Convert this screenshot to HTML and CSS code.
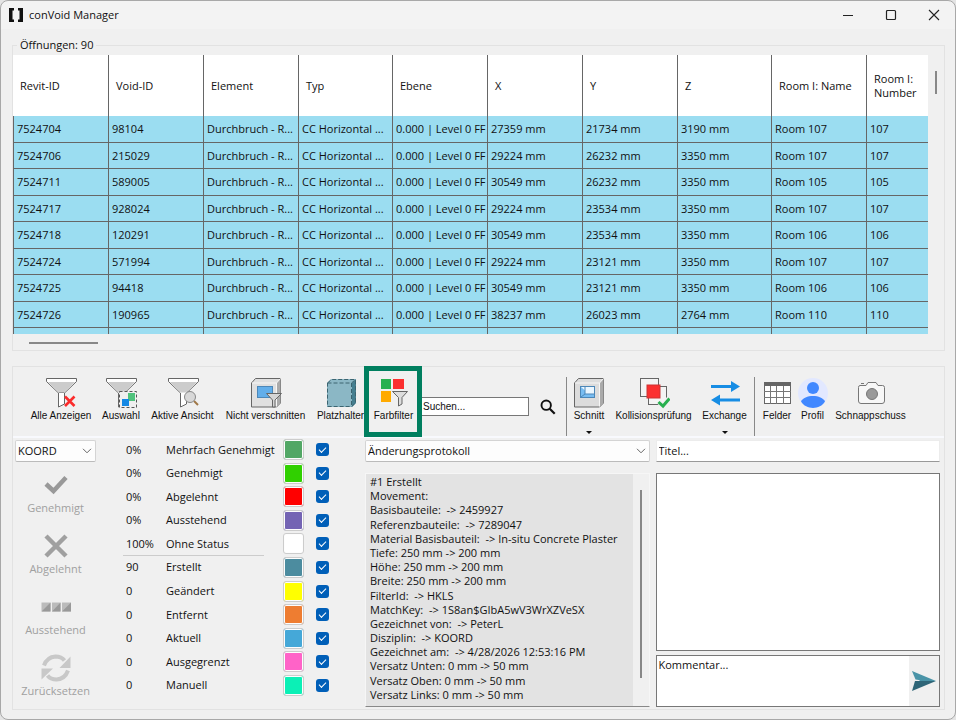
FILE: index.html
```html
<!DOCTYPE html>
<html lang="de">
<head>
<meta charset="utf-8">
<title>conVoid Manager</title>
<link rel="stylesheet" href="styles.css">
</head>
<body>
<div class="window">
  <header class="titlebar">
    <svg class="logo" viewBox="0 0 14 14" width="14" height="14"><path d="M0 0h5v2.500H3.500v9H5V14H0zM14 0H9v2.500h1.500v9H9V14h5z" fill="#111"/></svg>
    <h1>conVoid Manager</h1>
    <div class="window-controls">
      <button aria-label="Minimieren"><svg viewBox="0 0 12 12" width="12" height="12"><path d="M1 6.500h10" stroke="#222"/></svg></button>
      <button aria-label="Maximieren"><svg viewBox="0 0 12 12" width="12" height="12"><rect x="1.500" y="1.500" width="9" height="9" rx="1" fill="none" stroke="#222" stroke-width="1.200"/></svg></button>
      <button aria-label="Schließen"><svg viewBox="0 0 12 12" width="12" height="12"><path d="M1 1l10 10M11 1L1 11" stroke="#222" stroke-width="1.100"/></svg></button>
    </div>
  </header>

  <fieldset class="openings">
    <legend>Öffnungen: 90</legend>
    <div class="openings-body">
      <div class="table-view">
        <table>
          <colgroup><col><col><col><col><col><col><col><col><col><col></colgroup>
          <thead>
            <tr><th>Revit-ID</th><th>Void-ID</th><th>Element</th><th>Typ</th><th>Ebene</th><th>X</th><th>Y</th><th>Z</th><th>Room I: Name</th><th>Room I:<br>Number</th></tr>
          </thead>
          <tbody>
            <tr><td>7524704</td><td>98104</td><td>Durchbruch - R...</td><td>CC Horizontal ...</td><td>0.000 | Level 0 FF</td><td>27359 mm</td><td>21734 mm</td><td>3190 mm</td><td>Room 107</td><td>107</td></tr>
            <tr><td>7524706</td><td>215029</td><td>Durchbruch - R...</td><td>CC Horizontal ...</td><td>0.000 | Level 0 FF</td><td>29224 mm</td><td>26232 mm</td><td>3350 mm</td><td>Room 107</td><td>107</td></tr>
            <tr><td>7524711</td><td>589005</td><td>Durchbruch - R...</td><td>CC Horizontal ...</td><td>0.000 | Level 0 FF</td><td>30549 mm</td><td>26232 mm</td><td>3350 mm</td><td>Room 105</td><td>105</td></tr>
            <tr><td>7524717</td><td>928024</td><td>Durchbruch - R...</td><td>CC Horizontal ...</td><td>0.000 | Level 0 FF</td><td>29224 mm</td><td>23534 mm</td><td>3350 mm</td><td>Room 107</td><td>107</td></tr>
            <tr><td>7524718</td><td>120291</td><td>Durchbruch - R...</td><td>CC Horizontal ...</td><td>0.000 | Level 0 FF</td><td>30549 mm</td><td>23534 mm</td><td>3350 mm</td><td>Room 106</td><td>106</td></tr>
            <tr><td>7524724</td><td>571994</td><td>Durchbruch - R...</td><td>CC Horizontal ...</td><td>0.000 | Level 0 FF</td><td>29224 mm</td><td>23121 mm</td><td>3350 mm</td><td>Room 107</td><td>107</td></tr>
            <tr><td>7524725</td><td>94418</td><td>Durchbruch - R...</td><td>CC Horizontal ...</td><td>0.000 | Level 0 FF</td><td>30549 mm</td><td>23121 mm</td><td>3350 mm</td><td>Room 106</td><td>106</td></tr>
            <tr><td>7524726</td><td>190965</td><td>Durchbruch - R...</td><td>CC Horizontal ...</td><td>0.000 | Level 0 FF</td><td>38237 mm</td><td>26023 mm</td><td>2764 mm</td><td>Room 110</td><td>110</td></tr>
            <tr><td></td><td></td><td></td><td></td><td></td><td></td><td></td><td></td><td></td><td></td></tr>
          </tbody>
        </table>
      </div>
      <div class="scroll-y"><span></span></div>
    </div>
    <div class="scroll-x"><span></span></div>
  </fieldset>

  <main class="panel">
    <div class="toolbar">
      <button class="tool">
        <svg viewBox="0 0 32 32" width="32" height="32"><path d="M1.500 1.500h30v3L19.500 16v11l-6 3V16L1.500 4.500z" fill="#fff" stroke="#666"/><path d="M3 5h27L19 15.500h-5z" fill="#ccc"/><path d="M13.500 15.500h6" stroke="#999"/><path d="M20 19.500l9.500 9.500M29.500 19.500L20 29" stroke="#fb2c2c" stroke-width="2.600"/></svg>
        <span>Alle Anzeigen</span>
      </button>
      <button class="tool">
        <svg viewBox="0 0 32 32" width="32" height="32"><path d="M1.500 1.500h30v3L19.500 16v11l-6 3V16L1.500 4.500z" fill="#fff" stroke="#666"/><path d="M3 5h27L19 15.500h-5z" fill="#ccc"/><rect x="14.500" y="14.500" width="17" height="16" fill="#efefef" stroke="#555" stroke-dasharray="3 2"/><rect x="23" y="16" width="7" height="8" fill="#4fc27c"/><rect x="17" y="22" width="7" height="7" fill="#1488e4"/></svg>
        <span>Auswahl</span>
      </button>
      <button class="tool">
        <svg viewBox="0 0 32 32" width="32" height="32"><path d="M1.500 1.500h30v3L19.500 16v11l-6 3V16L1.500 4.500z" fill="#fff" stroke="#666"/><path d="M3 5h27L19 15.500h-5z" fill="#ccc"/><path d="M27 24l4 4" stroke="#a07848" stroke-width="2"/><circle cx="23" cy="20" r="5.500" fill="#d8d8d8" stroke="#888"/></svg>
        <span>Aktive Ansicht</span>
      </button>
      <button class="tool">
        <svg viewBox="0 0 32 32" width="32" height="32"><path d="M1.500 6l4-4.500h25V26l-4 4h-25z" fill="#e0e0e0" stroke="#666"/><path d="M26.500 6l4-4.500V26l-4 4z" fill="#aaa"/><path d="M2 6h24.500v23.500M26.500 6l4-4.500" fill="none" stroke="#f6f6f6"/><rect x="7.500" y="9.500" width="15" height="11" fill="#62aeea" stroke="#4c87b8"/><path d="M16.500 16.500h15L25 23v7h-2.500v-7z" fill="#d5d5d5" stroke="#666"/></svg>
        <span>Nicht verschnitten</span>
      </button>
      <button class="tool">
        <svg viewBox="0 0 32 32" width="32" height="32"><path d="M2 6l4-4h25v24l-4 4H2z" fill="#8bb7c5"/><path d="M27 6l4-4v24l-4 4z" fill="#467f90"/><path d="M2.500 6l4-3.500h24V26l-4 3.500h-24zM2.500 6h24v23.500M26.500 6l4-3.500" fill="none" stroke="#3c6470" stroke-dasharray="4 2"/></svg>
        <span>Platzhalter</span>
      </button>
      <button class="tool tool-marked">
        <svg viewBox="0 0 32 32" width="32" height="32"><rect x="3" y="2" width="10" height="10" fill="#28b050"/><rect x="15" y="2" width="11" height="10" fill="#fb3030"/><rect x="3" y="14" width="10" height="11" fill="#ffaa00"/><path d="M14.500 14.500h15l-5.500 6v6.500l-3.500 2V20.500z" fill="#ddd" stroke="#666"/></svg>
        <span>Farbfilter</span>
      </button>
      <input class="search" type="text" value="Suchen..." aria-label="Suchen">
      <button class="search-button" aria-label="Suche starten"><svg viewBox="0 0 16 16" width="16" height="16"><circle cx="6.200" cy="6.200" r="4.700" fill="none" stroke="#111" stroke-width="1.900"/><path d="M9.700 9.700l5 5" stroke="#111" stroke-width="2.200"/></svg></button>
      <span class="divider"></span>
      <button class="tool">
        <svg viewBox="0 0 32 32" width="32" height="32"><path d="M1.500 6l4-4.500h25V26l-4 4h-25z" fill="#dcdcdc" stroke="#666"/><path d="M26.500 6l4-4.500V26l-4 4z" fill="#aaa"/><path d="M2 6h24.500v23.500M26.500 6l4-4.500" fill="none" stroke="#f6f6f6"/><rect x="7.500" y="9.500" width="14" height="11" fill="#eaf6ff" stroke="#4c87b8"/><path d="M8 10l4 3.500V17h9v3H8z" fill="#78bdf2"/><path d="M12 10v7h9M8 20l4-3" fill="none" stroke="#4c87b8"/></svg>
        <span>Schnitt</span>
        <i class="drop"></i>
      </button>
      <button class="tool">
        <svg viewBox="0 0 32 32" width="32" height="32"><rect x="2.500" y="1.500" width="18" height="18" fill="#f4f4f4" stroke="#666"/><rect x="10.500" y="9.500" width="18" height="18" fill="#f4f4f4" stroke="#666"/><rect x="9" y="8" width="13" height="13" fill="#fb3030" stroke="#c33"/><path d="M20.500 24.500l4.500 4 6.500-7.500" fill="none" stroke="#efefef" stroke-width="5"/><path d="M20.500 25l4.500 4 6.500-7.500" fill="none" stroke="#27b04f" stroke-width="3"/></svg>
        <span>Kollisionsprüfung</span>
      </button>
      <button class="tool">
        <svg viewBox="0 0 32 32" width="32" height="32"><path d="M2 8h20V4l9 5.500-9 5.500v-4H2zM31 21.500H11v-4L2 23l9 5.500v-4h20z" fill="#178de4"/></svg>
        <span>Exchange</span>
        <i class="drop"></i>
      </button>
      <span class="divider divider-spaced"></span>
      <button class="tool">
        <svg viewBox="0 0 32 32" width="32" height="32"><rect x="3.500" y="5.500" width="26" height="21" fill="#fff" stroke="#666"/><path d="M3 5h27v4H3z" fill="#666"/><path d="M3 14.500h27M3 20.500h27M9.500 9v18M15.500 9v18M22.500 9v18" stroke="#777"/></svg>
        <span>Felder</span>
      </button>
      <button class="tool">
        <svg viewBox="0 0 32 32" width="32" height="32"><circle cx="16" cy="16" r="15" fill="#e2e8ff"/><circle cx="16" cy="11" r="6" fill="#4188ff"/><path d="M4 24.500c3-7.500 21-7.500 24 0-5 8.500-19 8.500-24 0z" fill="#4188ff"/></svg>
        <span>Profil</span>
      </button>
      <button class="tool">
        <svg viewBox="0 0 32 32" width="32" height="32"><path d="M5 8.500h6l2-3h8l2 3h4.500q2 0 2 2V24q0 2.500-2.500 2.500H6q-2.500 0-2.500-2.500V10.500q0-2 1.500-2z" fill="#f7f7f7" stroke="#777"/><path d="M6 6.500h3" stroke="#777"/><circle cx="17" cy="17" r="5.500" fill="#999" stroke="#777"/></svg>
        <span>Schnappschuss</span>
      </button>
    </div>

    <div class="details">
      <section class="approval">
        <div class="select-box">
          <select aria-label="Disziplin"><option>KOORD</option></select>
          <svg viewBox="0 0 10 6" width="10" height="6"><path d="M1 .8l4 4 4-4" fill="none" stroke="#666"/></svg>
        </div>
        <button class="action" disabled>
          <svg viewBox="0 0 30 30" width="30" height="30"><path d="M5 14l7.500 7L25 7.500" fill="none" stroke="#999" stroke-width="4.500"/></svg>
          <span>Genehmigt</span>
        </button>
        <button class="action" disabled>
          <svg viewBox="0 0 30 30" width="30" height="30"><path d="M5 5l20 20M25 5L5 25" stroke="#a0a0a0" stroke-width="4.500"/></svg>
          <span>Abgelehnt</span>
        </button>
        <button class="action" disabled>
          <svg viewBox="0 0 30 30" width="30" height="30"><path d="M.5 10.500h9v9h-9zM11 10.500h8.500v9H11zM21 10.500h9v9h-9z" fill="#bbb"/><path d="M9.500 10.500v9h-9zM19.500 10.500v9H11zM30 10.500v9h-9z" fill="#999"/></svg>
          <span>Ausstehend</span>
        </button>
        <button class="action" disabled>
          <svg viewBox="0 0 30 30" width="30" height="30"><path d="M3 12.500Q6 4 14.500 3.500q6 0 9 4M27 17.500Q24 26 15.500 26.500q-6 0-9-4" fill="none" stroke="#c8c8c8" stroke-width="4"/><path d="M29.500 3.500v11.500H18.500zM.5 26.500V15.500h11.500z" fill="#c8c8c8"/></svg>
          <span>Zurücksetzen</span>
        </button>
      </section>

      <section class="statuses">
        <div class="status"><span>0%</span><label for="s1">Mehrfach Genehmigt</label><button class="swatch multi" aria-label="Farbe"></button><input id="s1" type="checkbox" checked></div>
        <div class="status"><span>0%</span><label for="s2">Genehmigt</label><button class="swatch approved" aria-label="Farbe"></button><input id="s2" type="checkbox" checked></div>
        <div class="status"><span>0%</span><label for="s3">Abgelehnt</label><button class="swatch rejected" aria-label="Farbe"></button><input id="s3" type="checkbox" checked></div>
        <div class="status"><span>0%</span><label for="s4">Ausstehend</label><button class="swatch pending" aria-label="Farbe"></button><input id="s4" type="checkbox" checked></div>
        <div class="status status-last"><span>100%</span><label for="s5">Ohne Status</label><button class="swatch none" aria-label="Farbe"></button><input id="s5" type="checkbox" checked></div>
        <div class="status"><span>90</span><label for="s6">Erstellt</label><button class="swatch created" aria-label="Farbe"></button><input id="s6" type="checkbox" checked></div>
        <div class="status"><span>0</span><label for="s7">Geändert</label><button class="swatch changed" aria-label="Farbe"></button><input id="s7" type="checkbox" checked></div>
        <div class="status"><span>0</span><label for="s8">Entfernt</label><button class="swatch removed" aria-label="Farbe"></button><input id="s8" type="checkbox" checked></div>
        <div class="status"><span>0</span><label for="s9">Aktuell</label><button class="swatch current" aria-label="Farbe"></button><input id="s9" type="checkbox" checked></div>
        <div class="status"><span>0</span><label for="s10">Ausgegrenzt</label><button class="swatch excluded" aria-label="Farbe"></button><input id="s10" type="checkbox" checked></div>
        <div class="status"><span>0</span><label for="s11">Manuell</label><button class="swatch manual" aria-label="Farbe"></button><input id="s11" type="checkbox" checked></div>
      </section>

      <section class="history">
        <div class="select-box">
          <select aria-label="Protokoll"><option>Änderungsprotokoll</option></select>
          <svg viewBox="0 0 10 6" width="10" height="6"><path d="M1 .8l4 4 4-4" fill="none" stroke="#666"/></svg>
        </div>
        <div class="log">
          <div class="log-lines">
            <p>#1 Erstellt</p>
            <p>Movement:</p>
            <p>Basisbauteile:  -&gt; 2459927</p>
            <p>Referenzbauteile:  -&gt; 7289047</p>
            <p>Material Basisbauteil:  -&gt; In-situ Concrete Plaster</p>
            <p>Tiefe: 250 mm -&gt; 200 mm</p>
            <p>Höhe: 250 mm -&gt; 200 mm</p>
            <p>Breite: 250 mm -&gt; 200 mm</p>
            <p>FilterId:  -&gt; HKLS</p>
            <p>MatchKey:  -&gt; 1S8an$GIbA5wV3WrXZVeSX</p>
            <p>Gezeichnet von:  -&gt; PeterL</p>
            <p>Disziplin:  -&gt; KOORD</p>
            <p>Gezeichnet am:  -&gt; 4/28/2026 12:53:16 PM</p>
            <p>Versatz Unten: 0 mm -&gt; 50 mm</p>
            <p>Versatz Oben: 0 mm -&gt; 50 mm</p>
            <p>Versatz Links: 0 mm -&gt; 50 mm</p>
          </div>
          <div class="log-scroll"><span></span></div>
        </div>
      </section>

      <section class="comments">
        <input class="title-field" type="text" value="Titel..." aria-label="Titel">
        <textarea class="thread" aria-label="Verlauf" readonly></textarea>
        <div class="compose">
          <textarea aria-label="Kommentar">Kommentar...</textarea>
          <button aria-label="Senden"><svg viewBox="0 0 24 20" width="24" height="20"><path d="M0 0l24 10H8z" fill="#4a94a8"/><path d="M0 20l24-10H3z" fill="#2f6678"/><path d="M0 0l3.500 8.500L13 10z" fill="#4a94a8"/></svg></button>
        </div>
      </section>
    </div>
  </main>
</div>
</body>
</html>
```
FILE: styles.css
```css
* { box-sizing: border-box; }

body {
  margin: 0;
  background: #e4e4e4;
  color: #111;
  font: 11px/14px "Open Sans", "Noto Sans", sans-serif;
}

button, input, select, textarea {
  margin: 0;
  padding: 0;
  border: 0;
  border-radius: 0;
  background: none;
  color: inherit;
  font: inherit;
}

svg { display: block; flex: none; }

.window {
  display: flex;
  flex-direction: column;
  height: 100vh;
  min-height: 600px;
  padding: 0 10px 9px 11px;
  border: 1px solid #a8a8a8;
  border-radius: 8px;
  background: linear-gradient(#f3f3f3 28px, #f0f0f0 28px);
  overflow: hidden;
}

/* Title bar */
.titlebar {
  display: flex;
  align-items: center;
  height: 28px;
  margin: 0 -10px 0 -3px;
}

.titlebar h1 {
  flex: 1;
  margin: 0 0 0 6px;
  font-size: 11px;
  font-weight: 400;
}

.window-controls { display: flex; }

.window-controls button {
  display: grid;
  place-items: center;
  width: 43px;
  height: 28px;
}

/* Openings table */
.openings {
  display: flex;
  flex: 1;
  flex-direction: column;
  min-width: 0;
  min-height: 0;
  margin: 9px 0 15px;
  padding: 3px 0 0;
  border: 1px solid #e2e2e2;
}

.openings legend {
  margin-left: 4px;
  padding: 0 3px;
}

.openings-body {
  display: flex;
  flex: 1;
  min-height: 0;
}

.table-view {
  flex: 1;
  min-width: 0;
  overflow: hidden;
  background: #fff;
}

table {
  width: 949px;
  table-layout: fixed;
  border-spacing: 0;
}

col { width: 95px; }
col:first-child { width: 96px; }
col:nth-child(4n) { width: 94px; }

th, td {
  border-right: 1px solid #666;
  text-align: left;
  font-weight: 400;
  white-space: nowrap;
}

th {
  height: 61px;
  padding: 0 0 0 7px;
}

td {
  height: 26px;
  padding: 0 0 0 3px;
  border-bottom: 1px solid #666;
  background: #9bddf1;
}

td:first-child { border-left: 1px solid #666; }
tr:nth-child(odd) td { height: 27px; }

.scroll-y {
  width: 16px;
  padding: 16px 7px 0;
}

.scroll-y span {
  display: block;
  height: 23px;
  background: #888;
}

.scroll-x {
  height: 16px;
  padding: 8px 16px 0;
}

.scroll-x span {
  display: block;
  width: 69px;
  height: 2px;
  background: #888;
}

/* Lower panel */
.panel {
  flex: none;
  border: 1px solid #e2e2e2;
}

.toolbar {
  display: grid;
  grid-template-columns: 70px 50px 73px 93px 57px 49px 111px 37px 1px 44px 85px 57px 5px 38px 33px 83px;
  height: 71px;
  padding-left: 13px;
  border-bottom: 2px solid #f8f9fd;
}

.tool {
  display: flex;
  position: relative;
  flex-direction: column;
  align-items: center;
  padding-top: 10px;
  font-family: "Liberation Sans", sans-serif;
  font-size: 10px;
  white-space: nowrap;
}

.tool-marked::after {
  content: "";
  position: absolute;
  inset: -1px -4px -1px -5px;
  border: 5px solid #007f5f;
}

.tool-marked { z-index: 1; }

.drop {
  margin-top: 8px;
  border: 3px solid transparent;
  border-top-color: #111;
  border-bottom: 0;
}

.search {
  align-self: center;
  justify-self: end;
  width: 109px;
  height: 19px;
  margin-top: 10px;
  padding-left: 2px;
  border: 1px solid #777;
  background: #fff;
  font-family: "Liberation Sans", sans-serif;
  font-size: 10px;
}

.search-button {
  display: grid;
  place-items: center;
  padding-top: 10px;
}

.divider {
  width: 1px;
  margin-top: 10px;
  background: #888;
}

.divider-spaced { margin-left: 1px; }

.details {
  display: grid;
  grid-template-columns: 81px 269px minmax(0, 1fr) minmax(0, 1fr);
  height: 271px;
  padding: 0 4px 2px 2px;
}

.select-box {
  position: relative;
  height: 22px;
  margin-top: 2px;
}

.select-box select {
  appearance: none;
  width: 100%;
  height: 100%;
  padding-left: 2px;
  border: 1px solid #d4d4d4;
  border-bottom-color: #bbb;
  border-radius: 2px;
  background: #fdfdfd;
}

.select-box svg {
  position: absolute;
  top: 8px;
  right: 4px;
  pointer-events: none;
}

.approval {
  display: flex;
  flex-direction: column;
}

.action {
  display: flex;
  flex-direction: column;
  align-items: center;
  gap: 1px;
  height: 61px;
  padding-top: 8px;
  color: #a0a0a0;
}

.statuses {
  display: grid;
  grid-auto-rows: 1fr;
  padding: 0 0 10px 27px;
}

.status {
  display: grid;
  position: relative;
  grid-template-columns: 40px 111px 32px 20px;
  align-items: center;
  padding-left: 3px;
}

.status label { white-space: nowrap; }

.status-last::after {
  content: "";
  position: absolute;
  bottom: 0;
  left: 0;
  width: 141px;
  height: 1px;
  background: #ccc;
}

.swatch {
  justify-self: center;
  width: 21px;
  height: 21px;
  border: 1px solid #ccc;
  border-radius: 3px;
  background-color: #999;
  box-shadow: inset 0 0 0 1px #fdfdfd;
}

.multi { background-color: #52a765; }
.approved { background-color: #30d000; }
.rejected { background-color: #ff0000; }
.pending { background-color: #7464b4; }
.none { background-color: #ffffff; }
.created { background-color: #4c8c9f; }
.changed { background-color: #ffff00; }
.removed { background-color: #ee7d31; }
.current { background-color: #45a8d8; }
.excluded { background-color: #ff63c8; }
.manual { background-color: #0bf0b6; }

.status input {
  appearance: none;
  display: grid;
  place-items: center;
  justify-self: end;
  width: 13px;
  height: 13px;
  border-radius: 3px;
  background: #005fb8;
}

.status input::before {
  content: "";
  width: 6px;
  height: 3px;
  margin-bottom: 2px;
  border-left: 1px solid #fff;
  border-bottom: 1px solid #fff;
  transform: rotate(-45deg);
}

.history {
  display: flex;
  flex-direction: column;
  gap: 11px;
  margin-right: 3px;
}

.log {
  display: flex;
  flex: 1;
  min-height: 0;
  border: 1px solid #f6f6f6;
  border-bottom-color: #888;
}

.log-lines {
  display: flex;
  flex: 1;
  flex-direction: column;
  justify-content: space-between;
  min-width: 0;
  padding: 1px 4px 4px;
  background: #e3e3e3;
}

.log-lines p {
  margin: 0;
  white-space: pre;
}

.log-scroll {
  width: 16px;
  padding: 16px 7px 28px;
}

.log-scroll span {
  display: block;
  height: 100%;
  background: #888;
}

.comments {
  display: flex;
  flex-direction: column;
  padding: 2px 0 0 3px;
}

.title-field {
  height: 22px;
  margin-bottom: 11px;
  padding: 0 2px 2px;
  border: 1px solid #ececec;
  border-bottom-color: #999;
  background: #fff;
}

.thread {
  flex: 1;
  width: 100%;
  margin-bottom: 4px;
  border: 1px solid #777;
  background: #fff;
  resize: none;
}

.compose {
  display: flex;
  height: 52px;
  border: 1px solid #777;
}

.compose textarea {
  flex: 1;
  min-width: 0;
  padding: 2px;
  background: #fff;
  resize: none;
}

.compose button {
  display: grid;
  place-items: center;
  width: 30px;
}
```
